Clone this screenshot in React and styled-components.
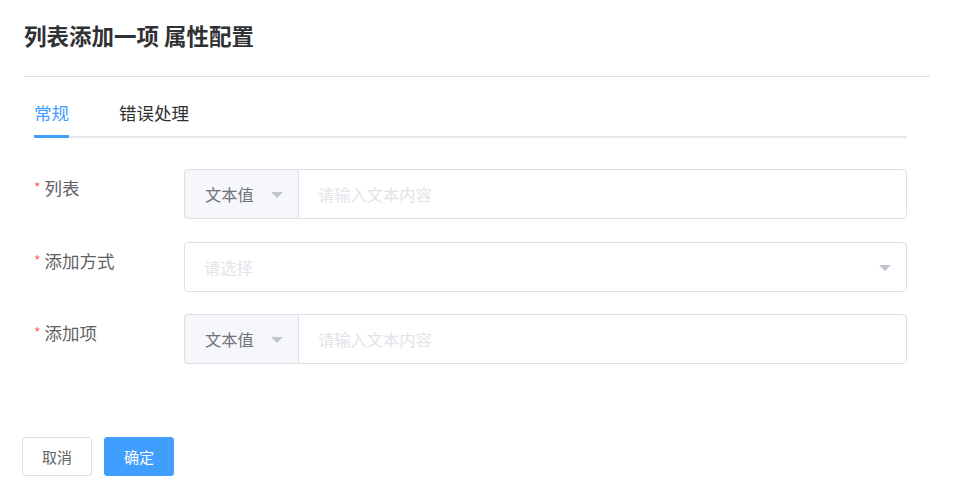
import React, { useState } from "react";
import styled, { createGlobalStyle } from "styled-components";

const GlobalStyle = createGlobalStyle`
  html, body {
    margin: 0;
    padding: 0;
    background: #ffffff;
    font-family: "Noto Sans CJK SC", "Noto Sans", sans-serif;
  }
  * { box-sizing: border-box; }
`;

const Page = styled.div`
  width: 953px;
  height: 500px;
  padding: 0 23px 0 24px;
  background: #fff;
`;

const Header = styled.div`
  height: 77px;
  padding-top: 19px;
  border-bottom: 1px solid #dcdfe6;
`;

const Title = styled.h2`
  margin: 0;
  font-size: 22.5px;
  line-height: 32px;
  font-weight: 700;
  color: #303133;
`;

const Body = styled.div`
  padding: 11px 23px 0 10px;
`;

const TabBar = styled.div`
  display: flex;
  gap: 50px;
  height: 50px;
  border-bottom: 2px solid #e4e7ed;
`;

const Tab = styled.div`
  position: relative;
  font-size: 17.5px;
  line-height: 50px;
  color: ${({ active }) => (active ? "#409eff" : "#303133")};
  cursor: pointer;

  &::after {
    content: "";
    display: ${({ active }) => (active ? "block" : "none")};
    position: absolute;
    left: 0;
    right: 0;
    bottom: -2px;
    height: 3px;
    background: #409eff;
  }
`;

const Form = styled.div`
  display: flex;
  flex-direction: column;
  gap: 22.5px;
  padding-top: 31px;
`;

const Row = styled.div`
  display: flex;
  align-items: flex-start;
`;

const Label = styled.label`
  width: 150px;
  flex-shrink: 0;
  padding-top: 5px;
  font-size: 17.5px;
  line-height: 26px;
  color: #606266;

  &::before {
    content: "*";
    color: #f56c6c;
    font-size: 14px;
    margin-right: 4px;
    vertical-align: 2px;
  }
`;

const Group = styled.div`
  flex: 1;
  display: flex;
  height: 50px;
`;

const Prepend = styled.div`
  width: 114px;
  display: flex;
  align-items: center;
  justify-content: space-between;
  padding: 0 15px 0 20px;
  background: #f5f7fa;
  border: 1px solid #dcdfe6;
  border-right: none;
  border-radius: 4px 0 0 4px;
  font-size: 16.25px;
  color: #707378;
`;

const Caret = styled.span`
  width: 0;
  height: 0;
  border-left: 6px solid transparent;
  border-right: 6px solid transparent;
  border-top: 6px solid #c0c4cc;
  margin-top: 2px;
`;

const Field = styled.input`
  flex: 1;
  min-width: 0;
  height: 50px;
  padding: 0 19px;
  border: 1px solid #dcdfe6;
  border-radius: ${({ joined }) => (joined ? "0 4px 4px 0" : "4px")};
  font-family: inherit;
  font-size: 16.25px;
  color: #606266;
  outline: none;

  &::placeholder {
    color: #e1e4e9;
  }
`;

const Select = styled.div`
  flex: 1;
  height: 50px;
  display: flex;
  align-items: center;
  justify-content: space-between;
  padding: 0 15px 0 19px;
  border: 1px solid #dcdfe6;
  border-radius: 4px;
  font-size: 16.25px;
  color: #e1e4e9;
`;

const Footer = styled.div`
  display: flex;
  gap: 12px;
  margin: 73px 0 0 -2px;
`;

const Button = styled.button`
  width: 70px;
  height: 39px;
  border-radius: 3px;
  font-family: inherit;
  font-size: 15px;
  cursor: pointer;
  border: 1px solid ${({ primary }) => (primary ? "#409eff" : "#dcdfe6")};
  background: ${({ primary }) => (primary ? "#409eff" : "#fff")};
  color: ${({ primary }) => (primary ? "#fff" : "#606266")};
`;

const TextInput = ({ placeholder }) => (
  <Group>
    <Prepend>
      文本值
      <Caret />
    </Prepend>
    <Field joined placeholder={placeholder} />
  </Group>
);

export default function App() {
  const [tab, setTab] = useState(0);
  const tabs = ["常规", "错误处理"];

  return (
    <Page>
      <GlobalStyle />
      <Header>
        <Title>列表添加一项 属性配置</Title>
      </Header>
      <Body>
        <TabBar>
          {tabs.map((t, i) => (
            <Tab key={t} active={tab === i} onClick={() => setTab(i)}>
              {t}
            </Tab>
          ))}
        </TabBar>
        <Form>
          <Row>
            <Label>列表</Label>
            <TextInput placeholder="请输入文本内容" />
          </Row>
          <Row>
            <Label>添加方式</Label>
            <Select>
              请选择
              <Caret />
            </Select>
          </Row>
          <Row>
            <Label>添加项</Label>
            <TextInput placeholder="请输入文本内容" />
          </Row>
        </Form>
      </Body>
      <Footer>
        <Button>取消</Button>
        <Button primary>确定</Button>
      </Footer>
    </Page>
  );
}
